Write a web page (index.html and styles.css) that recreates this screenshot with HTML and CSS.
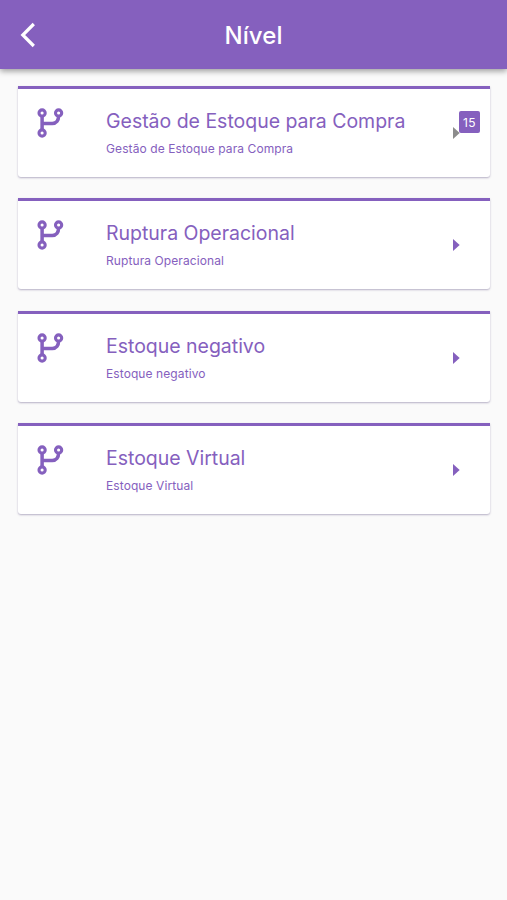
FILE: index.html
```html
<!DOCTYPE html>
<html lang="pt-BR">
<head>
<meta charset="utf-8">
<title>Nível</title>
<link rel="stylesheet" href="styles.css">
</head>
<body>
<svg width="0" height="0" class="defs">
  <symbol id="branch" viewBox="0 0 28 32">
    <g fill="none" stroke="currentColor" stroke-width="3.1">
      <circle cx="6.1" cy="6" r="3.1"/><circle cx="22.6" cy="6" r="3.1"/><circle cx="6.1" cy="26" r="3.1"/>
      <path d="M6.1 9v14M6.1 16.4h10.2c4 0 6.3-3 6.3-7.4" stroke-width="3.5"/>
    </g>
  </symbol>
  <symbol id="arrow" viewBox="0 0 7 12"><path d="M0 0l6.7 6L0 12z" fill="currentColor"/></symbol>
</svg>
<header class="bar">
  <svg class="back" viewBox="0 0 16 26"><path d="M13.8 2L2.8 13l11 11" fill="none" stroke="#fff" stroke-width="3.2"/></svg>
  <h1>Nível</h1>
</header>
<main class="list">
  <article class="card">
    <svg class="icon"><use href="#branch"/></svg>
    <div class="text"><h2>Gestão de Estoque para Compra</h2><p>Gestão de Estoque para Compra</p></div>
    <svg class="arrow muted"><use href="#arrow"/></svg>
    <span class="badge">15</span>
  </article>
  <article class="card">
    <svg class="icon"><use href="#branch"/></svg>
    <div class="text"><h2>Ruptura Operacional</h2><p>Ruptura Operacional</p></div>
    <svg class="arrow"><use href="#arrow"/></svg>
  </article>
  <article class="card">
    <svg class="icon"><use href="#branch"/></svg>
    <div class="text"><h2>Estoque negativo</h2><p>Estoque negativo</p></div>
    <svg class="arrow"><use href="#arrow"/></svg>
  </article>
  <article class="card">
    <svg class="icon"><use href="#branch"/></svg>
    <div class="text"><h2>Estoque Virtual</h2><p>Estoque Virtual</p></div>
    <svg class="arrow"><use href="#arrow"/></svg>
  </article>
</main>
</body>
</html>
```
FILE: styles.css
```css
* { box-sizing: border-box; }
body {
  margin: 0;
  min-height: 900px;
  background: #fafafa;
  font-family: Inter, "Liberation Sans", sans-serif;
  color: #8560be;
}
.defs { display: none; }
.bar {
  display: grid;
  grid-template-columns: 60px 1fr 60px;
  align-items: center;
  height: 69px;
  background: #8560be;
  box-shadow: 0 2px 6px rgba(0, 0, 0, .4);
}
.back { width: 16px; height: 26px; margin: 1px 0 0 20px; }
h1 {
  margin: 2px 0 0;
  color: #fff;
  font-size: 24px;
  line-height: 30px;
  font-weight: 500;
  letter-spacing: .1px;
  text-align: center;
}
.list {
  display: flex;
  flex-direction: column;
  gap: 21.4px;
  padding: 17px 17px 0 18px;
}
.card {
  position: relative;
  display: flex;
  height: 91px;
  padding-left: 18px;
  border-top: 3px solid #8560be;
  border-radius: 0 0 3px 3px;
  background: #fff;
  box-shadow: 0 1px 2px rgba(70, 55, 110, .38);
}
.icon { width: 28px; height: 32px; margin-top: 18px; }
.text { flex: 1; margin-left: 42px; padding-top: 19px; }
h2 {
  margin: 0;
  font-size: 19.5px;
  line-height: 26px;
  font-weight: 400;
  letter-spacing: -.02px;
  white-space: nowrap;
}
p {
  margin: 6px 0 0;
  font-size: 12px;
  line-height: 18px;
  letter-spacing: .09px;
}
.arrow { width: 7px; height: 12px; margin: 38px 30px 0 0; }
.muted { color: #8c8c8c; }
.badge {
  position: absolute;
  top: 22px;
  right: 10px;
  width: 21px;
  height: 22px;
  border-radius: 2px;
  background: #8560be;
  color: #fff;
  font-size: 12px;
  line-height: 23px;
  text-align: center;
  letter-spacing: .3px;
}
```
